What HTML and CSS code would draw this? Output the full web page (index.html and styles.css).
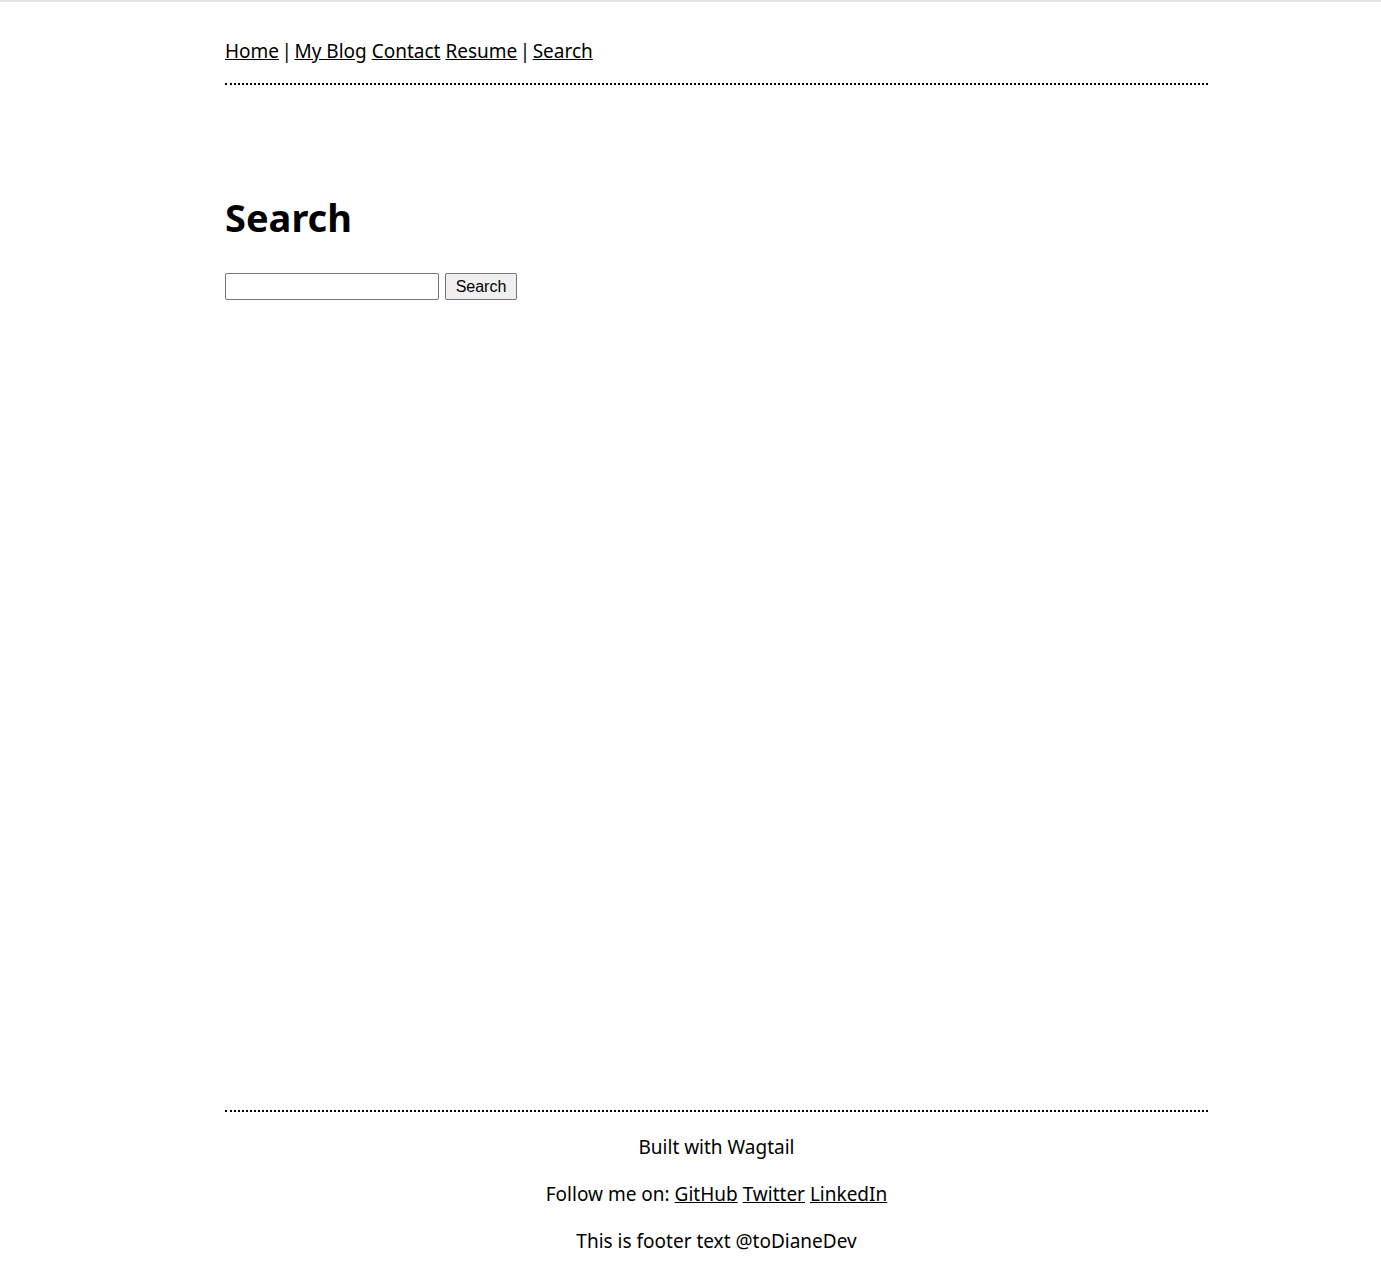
FILE: index.html
```html
<!DOCTYPE html>
<html lang="en">
<head>
<meta charset="utf-8">
<title>Search</title>
<link rel="stylesheet" href="styles.css">
</head>
<body>
<div class="topline"></div>
<div class="page">
  <header class="site-header">
    <nav class="nav">
      <a href="#">Home</a> <span class="sep">|</span> <a href="#">My Blog</a> <a href="#">Contact</a> <a href="#">Resume</a> <span class="sep">|</span> <a href="#">Search</a>
    </nav>
  </header>
  <main class="main">
    <h1 class="title">Search</h1>
    <form class="search-form">
      <input type="text" class="search-input" name="query">
      <button type="submit" class="search-button">Search</button>
    </form>
  </main>
  <footer class="site-footer">
    <p class="footer-line">Built with Wagtail</p>
    <p class="footer-line">Follow me on: <a href="#">GitHub</a> <a href="#">Twitter</a> <a href="#">LinkedIn</a></p>
    <p class="footer-line">This is footer text @toDianeDev</p>
  </footer>
</div>
</body>
</html>
```
FILE: styles.css
```css
html, body {
  margin: 0;
  padding: 0;
  background: #fff;
}
body {
  font-family: "Noto Sans", "Open Sans", sans-serif;
  font-size: 19px;
  line-height: 27px;
  color: #000;
}
.topline {
  height: 2px;
  background: #e3e3e3;
}
.page {
  width: 983px;
  margin-left: 225px;
}
a {
  color: #000;
  text-decoration: underline;
}
.sep {
  margin: 0 -2.5px;
}
.site-header {
  padding-top: 36px;
  padding-bottom: 18px;
  border-bottom: 2px dotted #000;
}
.main {
  height: 917px;
}
.title {
  font-size: 38px;
  line-height: 48px;
  font-weight: 700;
  margin: 108px 0 32px;
}
.search-form {
  display: flex;
  gap: 6px;
  align-items: center;
}
.search-input {
  width: 214px;
  height: 27px;
  box-sizing: border-box;
  border: 1px solid #767676;
  border-radius: 2px;
  padding: 1px 2px;
  margin: 0;
  font: 13px Arial, "Liberation Sans", sans-serif;
}
.search-button {
  height: 27px;
  width: 72px;
  box-sizing: border-box;
  border: 1px solid #767676;
  border-radius: 2px;
  background: #efefef;
  font: 16px "Liberation Sans", Arial, sans-serif;
  color: #000;
  padding: 0;
  margin: 0;
}
.site-footer {
  border-top: 2px dotted #000;
  text-align: center;
  padding-top: 22px;
}
.footer-line {
  margin: 0 0 20px;
}
```
